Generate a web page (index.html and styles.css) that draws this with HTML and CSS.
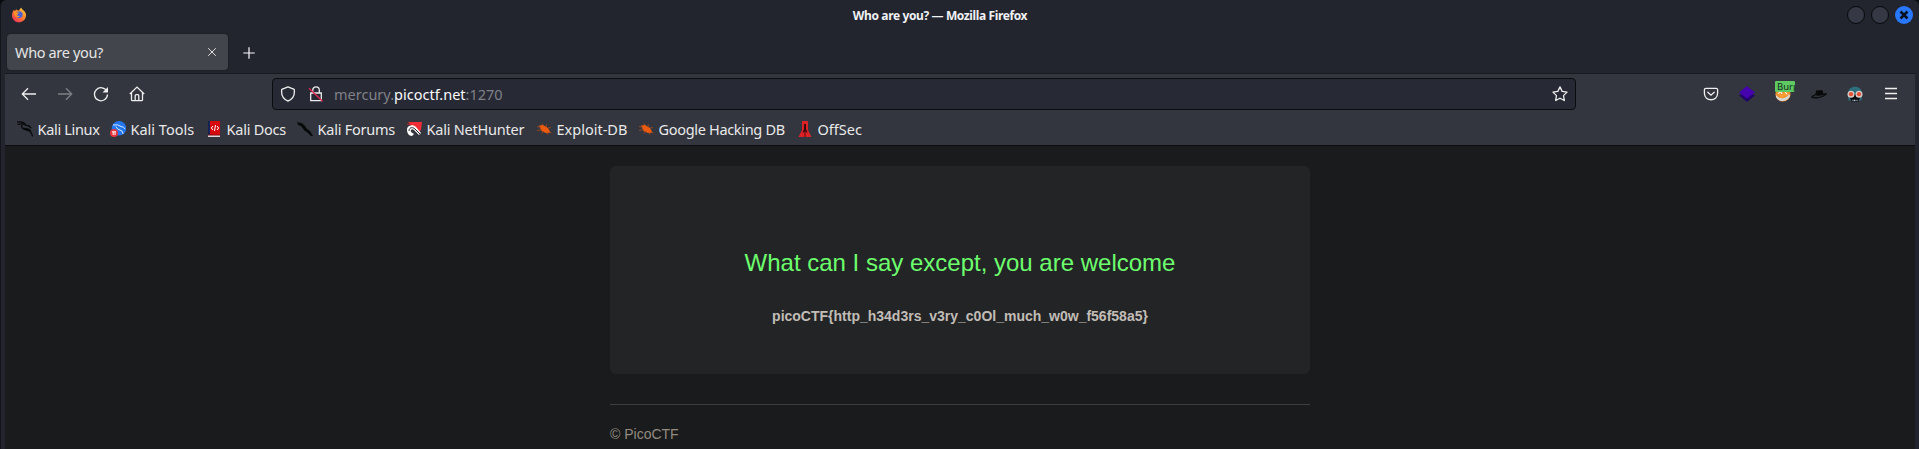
FILE: index.html
```html
<!DOCTYPE html>
<html lang="en">
<head>
<meta charset="utf-8">
<title>Who are you?</title>
<link rel="stylesheet" href="styles.css">
</head>
<body>
<svg class="defs" width="0" height="0">
  <defs>
    <linearGradient id="fox" x1="1" y1="0" x2="0.2" y2="1"><stop offset="0" stop-color="#ffe04a"/><stop offset=".45" stop-color="#ff8a2a"/><stop offset="1" stop-color="#f0305a"/></linearGradient>
    <symbol id="bug" viewBox="0 0 16 16"><path d="M3 4.500 7 4l5 3 2.500 4.500-4 .8-5-2.300z" fill="#ed5b10"/><path d="M1 5.500l4 1M1 9.500l5-1M6 2.500l1.500 2M10.500 3.500l-.5 2.500M12 7l3-.5M6 12.500l1.500-2.500M11 11l1 2.500M13 11l2.500 1" stroke="#a94a1c" stroke-width=".8" fill="none"/></symbol>
  </defs>
</svg>
<div class="window">
  <header class="titlebar">
    <svg class="fox" viewBox="0 0 16 16"><path d="M5.300 2.200C6 3.500 7 3.200 8.200 3.600 8.500 2 9.600 1 10.400.8c.3 1.500 1.400 1.800 2.400 2.900C14.500 5 15.300 7 15 9c-.5 3.800-3.500 6.300-7 6.300-4 0-7-3-7-6.800 0-2.300.7-4.500 2.200-5.700l.5 1.400z" fill="url(#fox)"/><path d="M5 6c1-1.600 3-1.800 4.700-1.400 1.800.8 2.300 2.600 1.700 4.300-.7 1.700-2.300 2.300-3.900 2C5.700 10.600 4.900 9.500 5 8z" fill="#4a62d8"/><path d="M2.500 4.200C4 4 5.300 4.500 6 5.400l2 .2C7.600 7 6.500 7 6 8c.4 1 1.500 1.400 3 1-1 1.600-3.300 1.700-4.600.4C3 8 3 6 2.500 4.200z" fill="#ff9328"/></svg>
    <span class="title">Who are you? — Mozilla Firefox</span>
    <div class="controls">
      <span class="control"></span><span class="control"></span>
      <span class="control close"><svg viewBox="0 0 18 18"><path d="M5.500 5.500l7 7M12.500 5.500l-7 7" stroke="#07101f" stroke-width="2.600"/></svg></span>
    </div>
  </header>
  <div class="tabs">
    <div class="tab"><span class="tab-name">Who are you?</span><svg class="tab-close" viewBox="0 0 10 10"><path d="M1.200 1.200l7.600 7.600M8.800 1.200L1.200 8.800" stroke="#dededf" fill="none"/></svg></div>
    <svg class="plus" viewBox="0 0 12 12"><path d="M6 .3v11.400M.3 6h11.400" stroke="#fbfbfe" stroke-width="1.200"/></svg>
  </div>
  <div class="browser">
    <nav class="nav">
      <div class="buttons">
        <svg viewBox="0 0 16 16"><path d="M15 8H1.300M7 2.300 1.300 8 7 13.700" class="line"/></svg>
        <svg viewBox="0 0 16 16" class="dim"><path d="M1 8h13.700M9 2.300 14.700 8 9 13.700" class="line"/></svg>
        <svg viewBox="0 0 16 16"><path d="M13.900 5.500A6.500 6.500 0 1 0 14.500 8.500" class="line"/><path d="M15 1v5.500H9.500z" fill="#f0f0f1"/></svg>
        <svg viewBox="0 0 16 16"><path d="M.8 8 8 1.100 15.200 8M2.500 6.500v7.200q0 1 1 1h9q1 0 1-1V6.500M6.200 14.500V9.700q0-1 1-1h1.600q1 0 1 1v4.800" class="line"/></svg>
      </div>
      <div class="urlbar">
        <svg viewBox="0 0 16 16"><path d="M8 .9 14.200 3.300c.7 4.500-.5 9.500-6.200 11.900C2.300 12.800 1.100 7.800 1.800 3.300z" class="line" stroke-linejoin="round"/></svg>
        <svg class="lock" viewBox="0 0 16 16"><path d="M4.700 7V4.300C4.700-.2 11.300-.2 11.300 4.300V7M2.700 7h10.600v7.700H2.700z" class="line"/><path d="M1 2.300 14.500 15.200" stroke="#e22850" stroke-width="1.400"/></svg>
        <span class="url">mercury.<b>picoctf.net</b>:1270</span>
        <svg class="star" viewBox="0 0 16 16"><path d="M8 .9l2.150 4.500 4.900.7-3.550 3.500.85 4.900L8 12.200l-4.350 2.300.85-4.900L.95 6.100l4.900-.7z" class="line" stroke-linejoin="round"/></svg>
      </div>
      <div class="extensions">
        <svg viewBox="0 0 16 16"><path d="M2.800 2.300h10.400q1.400 0 1.400 1.400v3.600c0 8.600-13.200 8.600-13.200 0V3.700q0-1.400 1.400-1.400z" class="line"/><path d="M4.800 6.200 8 9.200l3.200-3" class="line" stroke-linecap="round"/></svg>
        <svg viewBox="0 0 16 16"><path d="M0 9.200 8 16l8-6.800-4-1.500H4z" fill="#200468"/><path d="M8 0l8 6.500L8 12.500 0 6.500z" fill="#4504ae"/></svg>
        <span class="burp"><svg viewBox="0 0 16 16"><circle cx="8" cy="8" r="7.600" fill="#e99132"/><path d="M1 9c3 4.500 10 4.500 13-1l1 2c-2.500 6-11 7-14 1z" fill="#d9d8d6"/><path d="M2 7l4 2 4-3 3 1-2 3-5 2z" fill="#ff9e30"/><path d="M3 7.500 6 6l1 2M10 5.500l2 3" stroke="#fff" fill="none"/></svg><span class="badge">Burp</span></span>
        <svg viewBox="0 0 16 16"><path d="M.2 10.700c1.500-1.500 3-2.200 4.200-2.500L5.200 4.300q2.800.5 6-.3l1.300 3.600 3.300-.6c.3 2.300-3.500 4-8.500 5.200-4.700.8-7.300 0-7.100-1.500z" fill="#080909"/><path d="M2 10.700q1-1 2.200-1.400 4 1.100 8.400-.6l1.200-.3q-2.500 2.300-6.900 2.800-3.600.5-4.900-.5z" fill="#2c2f34"/></svg>
        <svg viewBox="0 0 16 16"><path d="M1 8C1 3 4 .7 8 .7S15 3 15 8l-.5 6.500h-13z" fill="#2c6e7c"/><path d="M3 8h10v4l-2 4H5l-2-4z" fill="#090b0e"/><circle cx="4" cy="8.200" r="3.500" fill="#d9cac5"/><circle cx="12" cy="8.200" r="3.500" fill="#d9cac5"/><circle cx="4" cy="8.200" r="2.100" fill="#e54f35"/><circle cx="12" cy="8.200" r="2.100" fill="#e54f35"/><path d="M5.500 14.500h5" stroke="#bcd" stroke-width="1.300" stroke-dasharray="1 .5"/></svg>
        <svg viewBox="0 0 16 16"><path d="M2 3.500h12M2 8.500h12M2 13.500h12" stroke="#eeeeef" stroke-width="1.300" transform="translate(0 -1)"/></svg>
      </div>
    </nav>
    <div class="bookmarks">
      <a class="tighter"><svg viewBox="0 0 16 16"><path d="M0 1.200C3 .5 7 1 9 4M.5 3.500C4 2.500 7 3 9 4.300q4 0 5 3M5 3.700C3.500 8 8 8.500 11 9.500c3 1 4 3 4.500 6M6 7.500c4 0 7 1 8 3" stroke="#08090a" stroke-width="1.300" fill="none"/></svg><span>Kali Linux</span></a>
      <a><svg viewBox="0 0 16 16"><circle cx="9" cy="7.300" r="7.300" fill="#2377ee"/><path d="M3 4q5-1 8 1.500 3 .2 4 2.500M6 5.500q1 3 4 3.500t3 4" stroke="#d8e8ff" fill="none"/><circle cx="4" cy="12" r="4" fill="#e7353d"/><path d="M2 10.800h4M3.200 10.800v3.200M5 10.800v3.200" stroke="#fff" fill="none"/></svg><span>Kali Tools</span></a>
      <a class="tight"><svg viewBox="0 0 16 16"><path d="M2 0h12v16H2z" fill="#d6080d"/><path d="M2 0h2v14H2z" fill="#152255"/><path d="M2 14h12v2H2z" fill="#ded6d8"/><path d="M2 14h12" stroke="#8b080d"/><path d="M7 5 5.300 7 7 9M11 5l1.700 2L11 9M9.500 4l-1 6" stroke="#fff" fill="none"/></svg><span>Kali Docs</span></a>
      <a class="tight"><svg viewBox="0 0 16 16"><path d="M0 0l2 2 1.500-.5L6 3l2 2 2 3 3 2 3 5h-2l-3-3-4-3-3-4-3-1z" fill="#070808"/></svg><span>Kali Forums</span></a>
      <a class="tight"><svg viewBox="0 0 16 16"><path d="M2 1h14l-1 8-3 3z" fill="#ef2d36"/><path d="M1 9c0-5 6-6 9-3l5 6-2 2-5-5c-2-2-4 0-3 2l3 2-2 2C3 15 1 12 1 9z" fill="#fff"/><path d="M3 10c0-4 4-4 6-2l5 5" fill="none" stroke="#222229"/><path d="M1 3l4 1" stroke="#b92730"/></svg><span>Kali NetHunter</span></a>
      <a><svg viewBox="0 0 16 16"><use href="#bug"/></svg><span>Exploit-DB</span></a>
      <a class="tighter"><svg viewBox="0 0 16 16"><use href="#bug"/></svg><span>Google Hacking DB</span></a>
      <a><svg viewBox="0 0 16 16"><path d="M5 0h6v9l3.500 7h-13L5 9z" fill="#dc2127"/><path d="M7 3h2v5l1.500 4L8 10.500 5.500 12 7 8z" fill="#36090c"/><path d="M7.300 11h1.400v5H7.300z" fill="#7d1115"/></svg><span>OffSec</span></a>
    </div>
    <main class="page">
      <div class="container">
        <section class="card"><h3>What can I say except, you are welcome</h3><strong>picoCTF{http_h34d3rs_v3ry_c0Ol_much_w0w_f56f58a5}</strong></section>
        <footer>© PicoCTF</footer>
      </div>
    </main>
  </div>
</div>
</body>
</html>
```
FILE: styles.css
```css
* { box-sizing: border-box; }
body { margin: 0; background: #0b0c10; overflow: hidden; font-family: "Noto Sans", sans-serif; }
svg { display: block; flex: none; }
.defs { position: absolute; }
.window { height: 449px; background: #23252e; border-left: 1px solid #14161b; border-radius: 6px 6px 0 0; padding: 0 4px 0 4px; display: flex; flex-direction: column; }
.titlebar { height: 34px; display: grid; grid-template-columns: 60px 1fr 100px; padding-bottom: 4px; align-items: center; }
.fox { width: 16px; height: 16px; margin-left: 6px; }
.title { text-align: center; font: 700 12px "Noto Sans", sans-serif; color: #eff1f4; white-space: nowrap; letter-spacing: -0.38px; }
.controls { display: flex; justify-content: flex-end; gap: 6px; padding-right: 2px; }
.control { width: 18px; height: 18px; border-radius: 50%; background: #353945; border: 1px solid #08090c; }
.close { background: #2777ff; border: 0; }
.tabs { height: 39px; display: flex; align-items: flex-start; padding-left: 2px; }
.tab { width: 221px; height: 36px; border-radius: 4px; background: #42454c; box-shadow: 0 0 2px #181a20; padding: 0 11px 0 8px; display: flex; align-items: center; justify-content: space-between; color: #e5e5e6; font-size: 14.5px; }
.tab-name { letter-spacing: -0.35px; }
.tab-close { width: 10px; height: 10px; }
.plus { width: 12px; height: 12px; margin: 13px 0 0 15px; }
.browser { flex: 1; background: #33363e; border-top: 1px solid #181a20; display: flex; flex-direction: column; }
.nav { height: 40px; display: flex; align-items: center; }
.nav svg { width: 16px; height: 16px; }
.line { fill: none; stroke: #eeeeef; stroke-width: 1.3; }
.dim { opacity: .4; }
.buttons { display: flex; gap: 20px; width: 267px; padding-left: 16px; }
.urlbar { width: 1304px; height: 32px; border: 1px solid #0b0c10; border-radius: 4px; background: #272935; display: flex; align-items: center; padding: 0 7px; }
.lock { margin-left: 12px; }
.url { color: #808188; font-size: 14.5px; margin-left: 10px; flex: 1; }
.url b { font-weight: 400; color: #fbfbfe; }
.extensions { flex: 1; display: flex; justify-content: flex-end; gap: 20px; padding-right: 16px; }
.burp { position: relative; }
.badge { position: absolute; left: 0; top: -5px; width: 20px; height: 11px; overflow: hidden; background: #5fca62; color: #10291a; font: 9.5px/11px "Noto Sans", sans-serif; padding-left: 2px; border-radius: 1px; }
.bookmarks { height: 32px; display: grid; grid-template-columns: 93px 96px 91px 109px 130px 102px 159px 70px; padding: 0 0 1px 12px; border-bottom: 1px solid #0c0d10; color: #e9e9ea; font-size: 14.5px; }
.bookmarks a { display: flex; align-items: center; gap: 4.5px; white-space: nowrap; }
.tight { letter-spacing: -0.23px; }
.tighter { letter-spacing: -0.32px; }
.bookmarks svg { width: 16px; height: 16px; }
.page { flex: 1; background: #1a1b1c; padding-top: 20px; font-family: "Liberation Sans", sans-serif; }
.container { width: 700px; margin: 0 auto; }
.card { height: 208px; border-radius: 6px; background: #232426; text-align: center; padding-top: 83px; }
h3 { margin: 0; font-size: 24px; line-height: 28px; font-weight: 400; color: #6dff6d; }
strong { display: block; margin-top: 29px; font-size: 14px; line-height: 20px; color: #c1bdb6; }
footer { margin-top: 30px; border-top: 1px solid #3c3e40; padding-top: 19px; color: #938b80; font-size: 14px; line-height: 20px; }
```
